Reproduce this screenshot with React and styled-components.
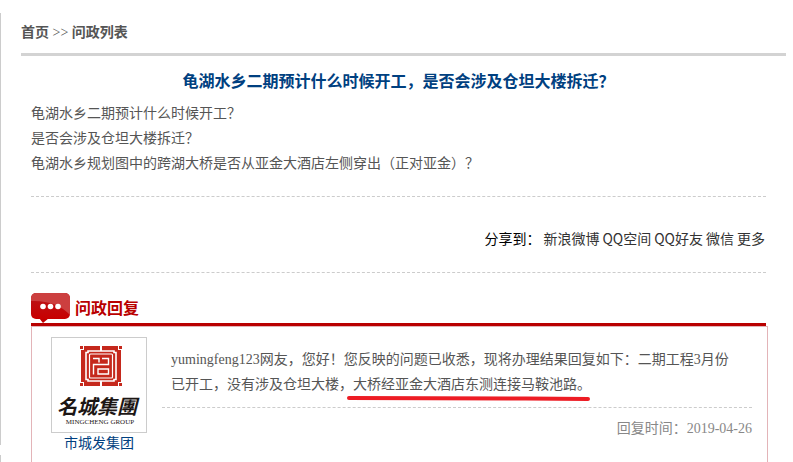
import React from 'react'
import styled, { createGlobalStyle } from 'styled-components'

const GlobalStyle = createGlobalStyle`
  body {
    margin: 0;
    background: #fff;
    color: #555;
    font: 14px/25px "Liberation Serif", "Noto Sans CJK SC", serif;
    text-spacing-trim: space-all;
  }
  a {
    color: inherit;
    text-decoration: none;
  }
`

const Page = styled.div`
  display: flex;
  padding-top: 13px;
`

const Rail = styled.div`
  display: flex;
  flex-direction: column;
  flex: 0 0 1px;
  gap: 10px;
`

const RailPart = styled.div`
  flex: ${props => props.$size};
  background: #ccc;
`

const Main = styled.main`
  flex: 1;
  min-width: 0;
  padding: 7px 7px 0 20px;
`

const Breadcrumb = styled.nav`
  padding-bottom: 7px;
  border-bottom: 3px solid #d3d3d3;
  line-height: 26px;

  a {
    font-weight: bold;
  }
`

const Content = styled.div`
  padding: 0 20px 0 10px;
`

const Title = styled.h1`
  margin: 11px 0 8px;
  color: #004080;
  font: bold 16px/26px "Noto Sans CJK SC", sans-serif;
  text-align: center;
`

const Question = styled.div`
  padding-bottom: 20px;
  border-bottom: 1px dashed #ccc;

  p {
    margin: 0;
  }
`

const Share = styled.div`
  display: flex;
  justify-content: flex-end;
  gap: 3px;
  padding: 29px 1px 21px 0;
  border-bottom: 1px dashed #ccc;
  color: #333;
  font-family: "Noto Sans CJK SC", sans-serif;
`

const ShareLabel = styled.span`
  color: #000;
`

const ReplyHeader = styled.header`
  display: flex;
  gap: 5px;
  margin-top: 20px;
  border-bottom: 3px solid #b90000;

  h2 {
    margin: 0;
    color: #b90000;
    font: bold 16px/28px "Noto Sans CJK SC", sans-serif;
  }
`

const ReplyBox = styled.section`
  display: flex;
  gap: 15px;
  margin-right: -2px;
  padding: 10px 15px 20px 19px;
  border: 1px solid #e3b4b8;
`

const Agency = styled.a`
  flex: none;
  text-align: center;
  line-height: 21px;

  && {
    color: #004080;
  }
`

const LogoFrame = styled.span`
  display: block;
  border: 1px solid #ccc;

  svg {
    display: block;
  }
`

const Reply = styled.div`
  flex: 1;
  min-width: 0;
`

const ReplyText = styled.p`
  margin: 0;
  padding: 10px 20px 10px 9px;
  border-bottom: 1px dashed #ccc;
`

const Marked = styled.span`
  position: relative;
`

const MarkerLine = styled.svg`
  position: absolute;
  left: -7px;
  top: 18px;
`

const ReplyTime = styled.div`
  padding-top: 8px;
  color: #888;
  text-align: right;
`

// full-width punctuation is escaped so editors don't swap it for ASCII
const title = '龟湖水乡二期预计什么时候开工\uff0c是否会涉及仓坦大楼拆迁\uff1f'

const questions = [
  '龟湖水乡二期预计什么时候开工\uff1f',
  '是否会涉及仓坦大楼拆迁\uff1f',
  '龟湖水乡规划图中的跨湖大桥是否从亚金大酒店左侧穿出\uff08正对亚金\uff09\uff1f',
]

const answer = 'yumingfeng123网友\uff0c您好\uff01您反映的问题已收悉\uff0c现将办理结果回复如下\uff1a二期工程3月份已开工\uff0c没有涉及仓坦大楼\uff0c'

const shareLinks = [
  { id: 'weibo', name: '新浪微博' },
  { id: 'qzone', name: 'QQ空间' },
  { id: 'qq', name: 'QQ好友' },
  { id: 'weixin', name: '微信' },
  { id: 'more', name: '更多' },
]

const BubbleIcon = () => (
  <svg width="39" height="30" viewBox="0 0 39 30" aria-hidden="true">
    <defs>
      <linearGradient id="bubble" x1="0" y1="0" x2="0" y2="1">
        <stop offset="0" stopColor="#b8181c" />
        <stop offset="1" stopColor="#c80000" />
      </linearGradient>
      <clipPath id="bubbleShape">
        <rect width="39" height="26" rx="5" />
      </clipPath>
    </defs>
    <path d="M8 25h10l-6 5z" fill="#c00000" />
    <rect width="39" height="26" rx="5" fill="url(#bubble)" />
    <path d="M0 8Q25 7 39 22V0H0z" fill="#cc3f3f" clipPath="url(#bubbleShape)" />
    <circle cx="12" cy="13.5" r="2.8" fill="#fff" />
    <circle cx="19.5" cy="13.5" r="2.8" fill="#fff" />
    <circle cx="27" cy="13.5" r="2.8" fill="#fff" />
  </svg>
)

const AgencyLogo = () => (
  <svg width="94" height="94" viewBox="0 0 94 94" role="img" aria-label="名城集團">
    <g fill="#c5281c">
      <path d="M28 8h3v3h-3zM67 8h3v3h-3zM28 45h3v3h-3zM67 45h3v3h-3z" />
      <path d="M32 8h34v4h3v32h-3v4H32v-4h-3V12h3z" />
    </g>
    <g fill="none" stroke="#fff">
      <path d="M36 13h26v1.500h2v27h-2V43H36v-1.500h-2v-27h2z" strokeWidth="1.6" />
      <path d="M49 8v5M49 43v5" strokeWidth="2" />
      <rect x="37.500" y="16" width="23" height="24" rx="1" strokeWidth="1.2" />
      <path d="M41 20.5h6v4M50 20.5h6.500v6H41.500v10M46 31h10.500v5H46z" strokeWidth="1.4" />
    </g>
    <text x="45" y="76" textAnchor="middle" fontFamily="Noto Sans CJK TC" fontSize="20" fontWeight="bold" fontStyle="italic" fill="#1c1614">名城集團</text>
    <text x="48" y="86" textAnchor="middle" fontFamily="Liberation Serif" fontSize="7" fill="#1c1614">MINGCHENG GROUP</text>
  </svg>
)

const App = () => (
  <>
    <GlobalStyle />
    <Page>
      <Rail>
        <RailPart $size="0 0 432px" />
        <RailPart $size="1" />
      </Rail>
      <Main>
        <Breadcrumb>
          <a href="#home">首页</a> &gt;&gt; <a href="#list">问政列表</a>
        </Breadcrumb>
        <Content>
          <Title>{title}</Title>
          <Question>
            {questions.map(text => <p key={text}>{text}</p>)}
          </Question>
          <Share>
            <ShareLabel>{'分享到\uff1a'}</ShareLabel>
            {shareLinks.map(({ id, name }) => (
              <a key={id} href={`#${id}`}>{name}</a>
            ))}
          </Share>
          <ReplyHeader>
            <BubbleIcon />
            <h2>问政回复</h2>
          </ReplyHeader>
          <ReplyBox>
            <Agency href="#agency">
              <LogoFrame>
                <AgencyLogo />
              </LogoFrame>
              市城发集团
            </Agency>
            <Reply>
              <ReplyText>
                {answer}
                <Marked>
                  大桥经亚金大酒店东测连接马鞍池路。
                  <MarkerLine width="246" height="8" viewBox="0 0 246 8" aria-hidden="true">
                    <path d="M3 3L180 3.5L242 4" fill="none" stroke="#ed1c24" strokeWidth="4" strokeLinecap="round" />
                  </MarkerLine>
                </Marked>
              </ReplyText>
              <ReplyTime>{'回复时间\uff1a'}2019-04-26</ReplyTime>
            </Reply>
          </ReplyBox>
        </Content>
      </Main>
    </Page>
  </>
)

export default App
